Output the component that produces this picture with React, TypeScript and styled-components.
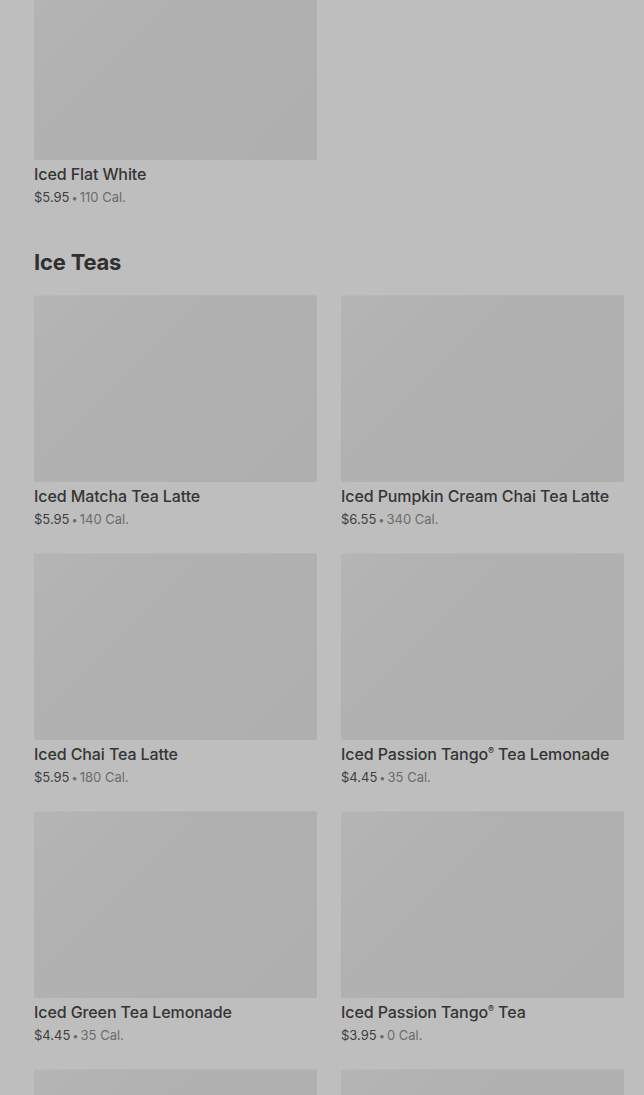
import React from "react";
import styled, { createGlobalStyle } from "styled-components";

const Global = createGlobalStyle`
  html, body { margin: 0; padding: 0; background: #bebebe; }
  body { font-family: Inter, "Noto Sans", Roboto, sans-serif; overflow: hidden; }
`;

const Page = styled.div`
  padding: 0 20px 0 34px;
  height: 1095px;
  overflow: hidden;
`;

const Scroll = styled.div`
  margin-top: -27px;
`;

const Section = styled.section`
  & + & { margin-top: 39px; }
`;

const Heading = styled.h2`
  margin: 0 0 17px;
  font-size: 22px;
  line-height: 32px;
  font-weight: 700;
  color: #2f2f2f;
  letter-spacing: -0.2px;
`;

const Grid = styled.div`
  display: grid;
  grid-template-columns: 283px 283px;
  column-gap: 24px;
  row-gap: 24px;
`;

const Card = styled.div`
  display: flex;
  flex-direction: column;
`;

const Image = styled.div`
  height: 187px;
  border-radius: 2px;
  background: linear-gradient(135deg, #b5b5b5 0%, #b1b1b1 30%, #afafaf 100%);
  box-shadow: inset 0 1px 0 rgba(255,255,255,0.06);
`;

const Name = styled.div`
  margin-top: 3px;
  height: 22px;
  font-size: 16px;
  line-height: 22px;
  font-weight: 500;
  color: #353535;
  white-space: nowrap;
  letter-spacing: -0.1px;
`;

const Reg = styled.sup`
  font-size: 9px;
  line-height: 0;
  vertical-align: 6px;
`;

const Meta = styled.div`
  margin-top: 2px;
  height: 20px;
  font-size: 13px;
  line-height: 20px;
  color: #6c6c6c;
  white-space: nowrap;
`;

const Price = styled.span`
  color: #3e3e3e;
`;

const Dot = styled.span`
  margin: 0 2px;
  font-size: 11px;
  line-height: 1;
  color: #6c6c6c;
`;

type Item = { name?: string; price?: string; cal?: string };

const renderName = (name: string) => {
  const parts = name.split("®");
  return parts.map((p, i) => (
    <React.Fragment key={i}>
      {p}
      {i < parts.length - 1 && <Reg>®</Reg>}
    </React.Fragment>
  ));
};

const Product = ({ item }: { item: Item }) => (
  <Card>
    <Image />
    {item.name && <Name>{renderName(item.name)}</Name>}
    {item.price && (
      <Meta>
        <Price>{item.price}</Price>
        <Dot>•</Dot>
        {item.cal}
      </Meta>
    )}
  </Card>
);

const teas: Item[] = [
  { name: "Iced Matcha Tea Latte", price: "$5.95", cal: "140 Cal." },
  { name: "Iced Pumpkin Cream Chai Tea Latte", price: "$6.55", cal: "340 Cal." },
  { name: "Iced Chai Tea Latte", price: "$5.95", cal: "180 Cal." },
  { name: "Iced Passion Tango® Tea Lemonade", price: "$4.45", cal: "35 Cal." },
  { name: "Iced Green Tea Lemonade", price: "$4.45", cal: "35 Cal." },
  { name: "Iced Passion Tango® Tea", price: "$3.95", cal: "0 Cal." },
  {},
  {},
];

export default function App() {
  return (
    <>
      <Global />
      <Page>
        <Scroll>
          <Section>
            <Grid>
              <Product item={{ name: "Iced Flat White", price: "$5.95", cal: "110 Cal." }} />
            </Grid>
          </Section>
          <Section>
            <Heading>Ice Teas</Heading>
            <Grid>
              {teas.map((t, i) => (
                <Product key={i} item={t} />
              ))}
            </Grid>
          </Section>
        </Scroll>
      </Page>
    </>
  );
}
